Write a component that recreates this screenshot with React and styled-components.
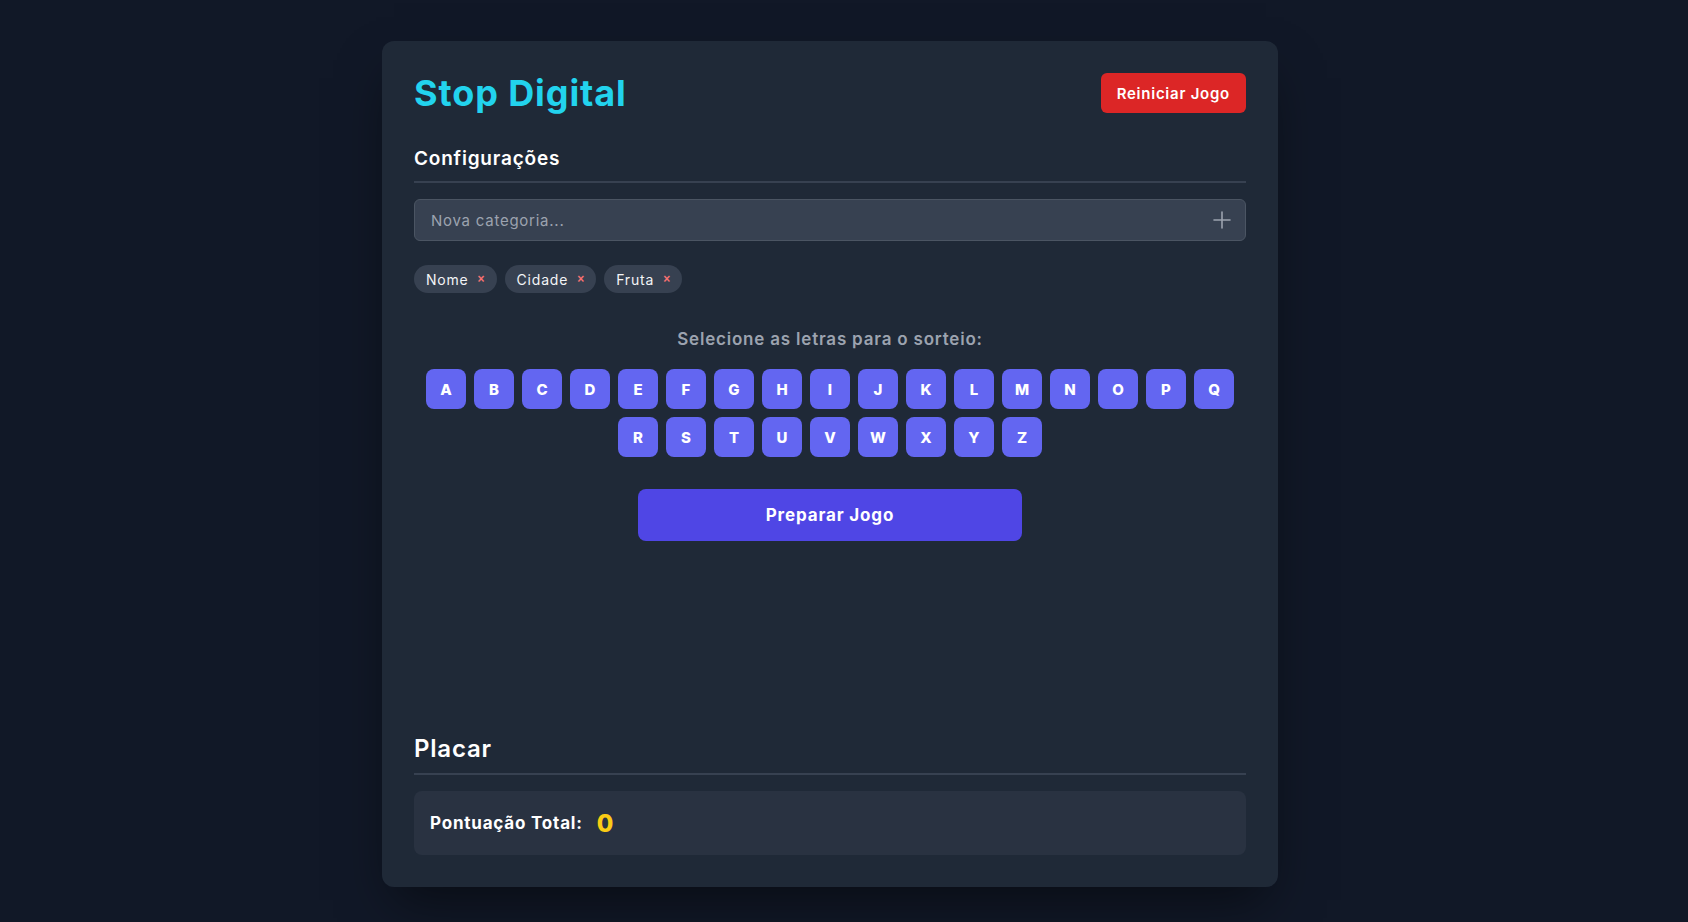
import React, { useState } from "react";
import styled, { createGlobalStyle } from "styled-components";

const GlobalStyle = createGlobalStyle`
  * { box-sizing: border-box; }
  body {
    margin: 0;
    background-color: #111827;
    font-family: "Inter", "Noto Sans", sans-serif;
    letter-spacing: 0.05em;
    color: #f3f4f6;
  }
`;

const Page = styled.div`
  min-height: 100vh;
  display: flex;
  justify-content: center;
  align-items: flex-start;
  padding: 41px 28px 36px 0;
`;

const Card = styled.div`
  width: 896px;
  background-color: #1f2937;
  border-radius: 12px;
  padding: 32px;
  box-shadow: 0 25px 50px -12px rgba(0, 0, 0, 0.5);
`;

const Header = styled.div`
  display: flex;
  justify-content: space-between;
  align-items: center;
  margin-bottom: 32px;
`;

const Title = styled.h1`
  margin: 0;
  font-size: 36px;
  line-height: 40px;
  font-weight: 700;
  color: #22d3ee;
  letter-spacing: 0.9px;
`;

const ResetButton = styled.button`
  height: 40px;
  padding: 0 16px;
  border: none;
  border-radius: 6px;
  background-color: #dc2626;
  color: white;
  font-family: inherit;
  font-size: 15px;
  font-weight: 600;
  letter-spacing: 0.05em;
  cursor: pointer;
`;

const SectionTitle = styled.h2`
  margin: 0 0 16px;
  padding-bottom: 8px;
  border-bottom: 2px solid #374151;
  font-size: ${(p) => (p.$large ? "24px" : "19px")};
  line-height: ${(p) => (p.$large ? "32px" : "28px")};
  font-weight: 600;
  color: #fff;
`;

const InputRow = styled.div`
  position: relative;
  display: flex;
  align-items: center;
`;

const Input = styled.input`
  width: 100%;
  height: 42px;
  padding: 0 48px 0 16px;
  background-color: #374151;
  border: 1px solid #4b5563;
  border-radius: 6px;
  color: #f3f4f6;
  font-family: inherit;
  font-size: 15px;
  letter-spacing: 0.05em;
  outline: none;

  &::placeholder {
    color: #9ca3af;
  }
`;

const AddButton = styled.button`
  position: absolute;
  right: 12px;
  width: 24px;
  height: 24px;
  display: flex;
  align-items: center;
  justify-content: center;
  padding: 0;
  border: none;
  background: none;
  color: #9ca3af;
  cursor: pointer;
`;

const Tags = styled.div`
  display: flex;
  flex-wrap: wrap;
  gap: 8px;
  margin-top: 24px;
`;

const Tag = styled.span`
  display: inline-flex;
  align-items: center;
  height: 28px;
  padding: 0 12px;
  border-radius: 999px;
  background-color: #374151;
  font-size: 14px;
  color: #f3f4f6;
`;

const TagRemove = styled.button`
  margin-left: 9px;
  padding: 0;
  border: none;
  background: none;
  color: #f87171;
  font-size: 12px;
  font-weight: 700;
  line-height: 1;
  cursor: pointer;
`;

const LetterLabel = styled.p`
  margin: 32px 0 16px;
  text-align: center;
  font-size: 17px;
  line-height: 28px;
  font-weight: 600;
  color: #9ca3af;
`;

const Letters = styled.div`
  display: flex;
  flex-wrap: wrap;
  justify-content: center;
  gap: 8px;
`;

const Letter = styled.button`
  width: 40px;
  height: 40px;
  padding: 0;
  border: none;
  border-radius: 8px;
  background-color: ${(p) => (p.$active ? "#6366f1" : "#374151")};
  color: #fff;
  font-family: inherit;
  font-size: 15px;
  font-weight: 800;
  cursor: pointer;
`;

const PrepareButton = styled.button`
  display: block;
  width: 384px;
  height: 52px;
  margin: 32px auto 0;
  border: none;
  border-radius: 8px;
  background-color: #4f46e5;
  color: #fff;
  font-family: inherit;
  font-size: 17px;
  font-weight: 700;
  letter-spacing: 0.05em;
  cursor: pointer;
`;

const GameArea = styled.div`
  height: 192px;
`;

const ScoreBox = styled.div`
  display: flex;
  align-items: center;
  height: 64px;
  padding: 0 16px;
  border-radius: 8px;
  background-color: #293241;
`;

const ScoreLabel = styled.span`
  font-size: 17px;
  font-weight: 700;
  color: #fff;
`;

const ScoreValue = styled.span`
  margin-left: 14px;
  font-size: 24px;
  font-weight: 800;
  color: #facc15;
`;

const PlusIcon = () => (
  <svg width="20" height="20" viewBox="0 0 20 20" fill="none" stroke="currentColor" strokeWidth="1.6" strokeLinecap="round">
    <line x1="10" y1="2" x2="10" y2="18" />
    <line x1="2" y1="10" x2="18" y2="10" />
  </svg>
);

const ALPHABET = "ABCDEFGHIJKLMNOPQRSTUVWXYZ".split("");

export default function App() {
  const [categories, setCategories] = useState(["Nome", "Cidade", "Fruta"]);
  const [newCategory, setNewCategory] = useState("");
  const [selected, setSelected] = useState(ALPHABET);

  const addCategory = () => {
    const value = newCategory.trim();
    if (!value) return;
    setCategories([...categories, value]);
    setNewCategory("");
  };

  const toggleLetter = (l) => {
    setSelected(selected.includes(l) ? selected.filter((x) => x !== l) : [...selected, l]);
  };

  return (
    <>
      <GlobalStyle />
      <Page>
        <Card>
          <Header>
            <Title>Stop Digital</Title>
            <ResetButton>Reiniciar Jogo</ResetButton>
          </Header>

          <SectionTitle>Configurações</SectionTitle>
          <InputRow>
            <Input
              placeholder="Nova categoria..."
              value={newCategory}
              onChange={(e) => setNewCategory(e.target.value)}
            />
            <AddButton onClick={addCategory}>
              <PlusIcon />
            </AddButton>
          </InputRow>

          <Tags>
            {categories.map((c) => (
              <Tag key={c}>
                {c}
                <TagRemove onClick={() => setCategories(categories.filter((x) => x !== c))}>×</TagRemove>
              </Tag>
            ))}
          </Tags>

          <LetterLabel>Selecione as letras para o sorteio:</LetterLabel>
          <Letters>
            {ALPHABET.map((l) => (
              <Letter key={l} $active={selected.includes(l)} onClick={() => toggleLetter(l)}>
                {l}
              </Letter>
            ))}
          </Letters>

          <PrepareButton>Preparar Jogo</PrepareButton>
          <GameArea />

          <SectionTitle $large>Placar</SectionTitle>
          <ScoreBox>
            <ScoreLabel>Pontuação Total:</ScoreLabel>
            <ScoreValue>0</ScoreValue>
          </ScoreBox>
        </Card>
      </Page>
    </>
  );
}
